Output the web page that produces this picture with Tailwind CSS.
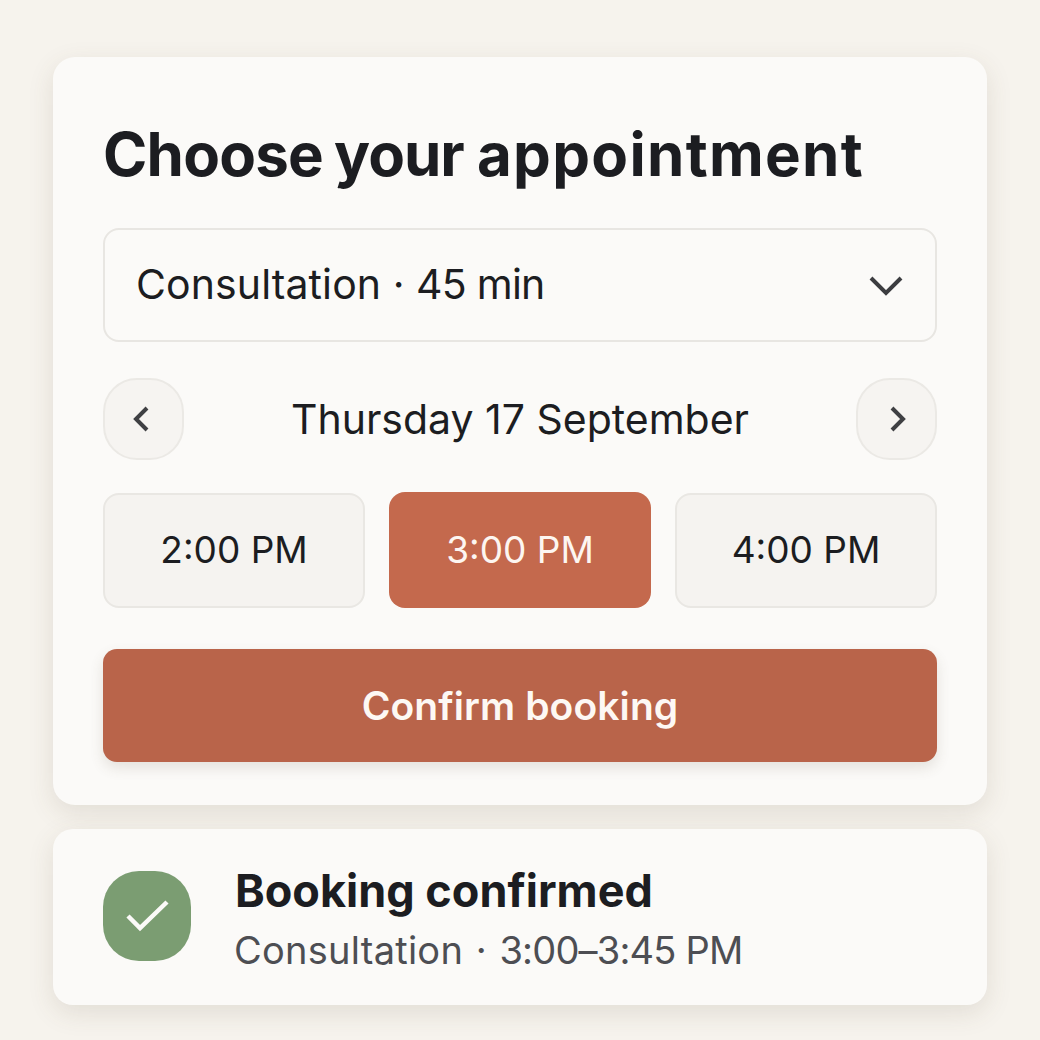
<!DOCTYPE html>
<html lang="en">

<head>
  <meta charset="UTF-8">
  <meta name="viewport" content="width=device-width, initial-scale=1.0">
  <title>Choose your appointment</title>
  <script src="https://cdn.jsdelivr.net/npm/@tailwindcss/browser@4"></script>
</head>

<body class="bg-[#f6f3ed] h-[1040px] overflow-hidden font-['Inter',sans-serif] text-[#1c1d21]">
  <div class="flex flex-col gap-[24px] pt-[57px] px-[53px]">
    <!-- Booking card -->
    <div class="bg-[#fbfaf8] rounded-[22px] h-[748px] px-[50px] pt-[64px] shadow-[0_8px_26px_rgba(90,75,55,0.13)]">
      <h1 class="h-[66px] leading-[66px] text-[60px] font-bold [word-spacing:-3px] whitespace-nowrap"><span class="tracking-[-0.8px]">Choose</span> <span class="tracking-[-1px]">your</span> <span class="ml-[2px] tracking-[1.3px]">appointment</span></h1>

      <!-- Service select -->
      <div class="mt-[41px] h-[114px] flex items-center justify-between pl-[31px] pr-[31px] border-2 border-[#e8e6e2] rounded-[16px] bg-[#fbfaf8]">
        <span class="text-[41px] whitespace-nowrap"><span class="tracking-[0.1px]">Consultation</span> · <span class="tracking-[-0.75px]">45 min</span></span>
        <svg class="w-[36px] h-[24px] text-[#3c3d40]" viewBox="0 0 36 24" fill="none" stroke="currentColor" stroke-width="4">
          <path d="M3 5l15 15L33 5"></path>
        </svg>
      </div>

      <!-- Date nav -->
      <div class="mt-[36px] flex items-center justify-between">
        <button class="w-[81px] h-[82px] flex items-center justify-center rounded-[34px] border-2 border-[#ebe9e5] bg-[#f6f4f1]">
          <svg class="w-[18px] h-[28px] mr-[5px] text-[#3f4043]" viewBox="0 0 18 28" fill="none" stroke="currentColor" stroke-width="4">
            <path d="M15 3L4 14l11 11"></path>
          </svg>
        </button>
        <span class="text-[41px] mt-[2px] whitespace-nowrap">Thursday 17 September</span>
        <button class="w-[81px] h-[82px] flex items-center justify-center rounded-[34px] border-2 border-[#ebe9e5] bg-[#f6f4f1]">
          <svg class="w-[18px] h-[28px] ml-[3px] text-[#3f4043]" viewBox="0 0 18 28" fill="none" stroke="currentColor" stroke-width="4">
            <path d="M3 3l11 11L3 25"></path>
          </svg>
        </button>
      </div>

      <!-- Time slots -->
      <div class="mt-[33px] grid grid-cols-3 gap-[24px]">
        <button class="h-[115px] pb-[2px] rounded-[16px] border-2 border-[#e9e7e3] bg-[#f5f3f0] text-[37px]">2:00 PM</button>
        <button class="h-[116px] -mt-[1px] rounded-[16px] bg-[#c4694d] text-[#fdf6f1] text-[37px]">3:00 PM</button>
        <button class="h-[115px] pb-[2px] rounded-[16px] border-2 border-[#e9e7e3] bg-[#f5f3f0] text-[37px]">4:00 PM</button>
      </div>

      <button class="mt-[41px] w-full h-[113px] pt-[2px] rounded-[14px] bg-[#b9644a] text-[#fdf8f4] text-[39px] tracking-[0.1px] font-semibold shadow-[0_6px_14px_rgba(90,75,55,0.14)]">Confirm booking</button>
    </div>

    <!-- Confirmation card -->
    <div class="bg-[#fbfaf8] rounded-[20px] h-[176px] px-[50px] flex items-center gap-[44px] shadow-[0_8px_26px_rgba(90,75,55,0.13)]">
      <div class="w-[88px] h-[90px] mb-[2px] shrink-0 flex items-center justify-center rounded-[36px] bg-[#7b9d72]">
        <svg class="w-[44px] h-[34px] text-[#fbfaf8]" viewBox="0 0 44 34" fill="none" stroke="currentColor" stroke-width="4.5">
          <path d="M3 17l12 12L42 3"></path>
        </svg>
      </div>
      <div class="flex flex-col gap-[6px] -ml-[1px] mt-[4px]">
        <div class="h-[56px] leading-[56px] text-[45px] ml-[1px] font-bold whitespace-nowrap">Booking confirmed</div>
        <div class="h-[50px] leading-[50px] text-[38px] text-[#4d4e53] whitespace-nowrap"><span class="tracking-[0.25px]">Consultation</span><span class="mx-[2px]"> · </span><span class="tracking-[-0.8px]">3:00–3:45 PM</span></div>
      </div>
    </div>
  </div>
</body>

</html>
